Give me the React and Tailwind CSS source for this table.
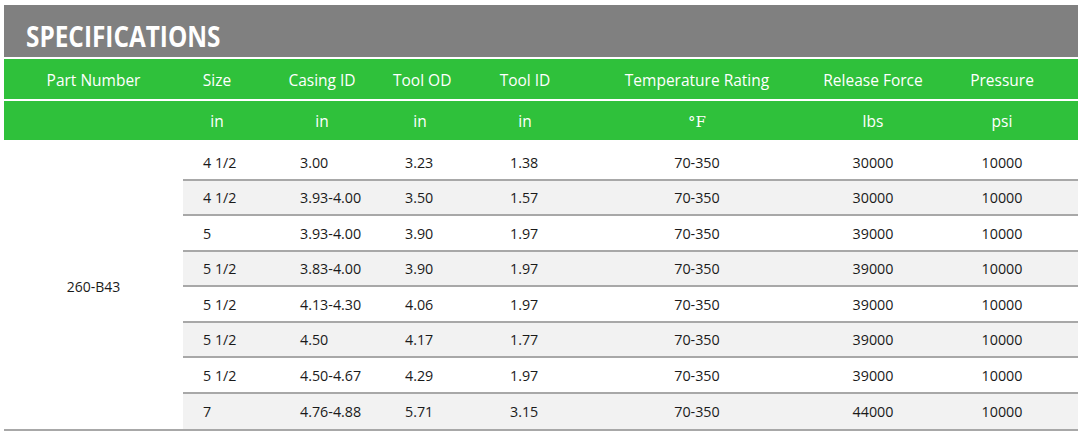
import React from "react";

const rows = [
  ["4 1/2", "3.00", "3.23", "1.38", "70-350", "30000", "10000"],
  ["4 1/2", "3.93-4.00", "3.50", "1.57", "70-350", "30000", "10000"],
  ["5", "3.93-4.00", "3.90", "1.97", "70-350", "39000", "10000"],
  ["5 1/2", "3.83-4.00", "3.90", "1.97", "70-350", "39000", "10000"],
  ["5 1/2", "4.13-4.30", "4.06", "1.97", "70-350", "39000", "10000"],
  ["5 1/2", "4.50", "4.17", "1.77", "70-350", "39000", "10000"],
  ["5 1/2", "4.50-4.67", "4.29", "1.97", "70-350", "39000", "10000"],
  ["7", "4.76-4.88", "5.71", "3.15", "70-350", "44000", "10000"],
];

const cols = "grid grid-cols-[179px_68px_142px_54px_156px_188px_164px_123px]";
const font = { fontFamily: '"Open Sans", "Noto Sans", sans-serif' };

export default function App() {
  return (
    <div className="w-[1084px] h-[437px] bg-white pt-[5px] pl-[4px] pr-[6px]" style={font}>
      <div className="h-[52px] bg-[#808080] flex items-center pl-[22px]">
        <span
          className="inline-block origin-left scale-x-[0.87] text-white font-bold text-[28px] leading-none pt-[9px] whitespace-nowrap"
          style={{ fontFamily: '"Open Sans", sans-serif' }}
        >
          SPECIFICATIONS
        </span>
      </div>
      <div className={`${cols} h-[40px] mt-[2px] pt-[3px] bg-[#2fc13b] text-white text-[15.5px] items-center text-center whitespace-nowrap`}>
        <div>Part Number</div>
        <div>Size</div>
        <div>Casing ID</div>
        <div>Tool OD</div>
        <div>Tool ID</div>
        <div>Temperature Rating</div>
        <div>Release Force</div>
        <div className="pr-[29px]">Pressure</div>
      </div>
      <div className={`${cols} h-[39px] mt-[2px] pt-[3px] bg-[#2fc13b] text-white text-[15.5px] items-center text-center`}>
        <div></div>
        <div>in</div>
        <div>in</div>
        <div>in</div>
        <div>in</div>
        <div style={{ fontFamily: '"DejaVu Serif", "Liberation Serif", serif' }} className="text-[15px]">°F</div>
        <div>lbs</div>
        <div className="pr-[29px]">psi</div>
      </div>
      <div className="flex border-b-2 border-[#a8a8a8] mt-[3px]">
        <div className="w-[179px] flex items-center justify-center text-[14px] text-[#1a1a1a]">260-B43</div>
        <div className="flex-1 flex flex-col">
          {rows.map((r, i) => (
            <div
              key={i}
              className={`grid grid-cols-[68px_142px_54px_156px_188px_164px_123px] items-center text-[14.3px] text-[#1a1a1a] whitespace-nowrap ${
                i === 0 ? "h-[37.5px] pt-[3px]" : "h-[35.5px] pt-[1px]"
              } ${i % 2 === 1 ? "bg-[#f2f2f2]" : "bg-white"} ${
                i < rows.length - 1 ? "border-b-2 border-[#a8a8a8]" : ""
              }`}
            >
              <div className="pl-[20px]">{r[0]}</div>
              <div className="pl-[49px]">{r[1]}</div>
              <div className="pl-[12px]">{r[2]}</div>
              <div className="pl-[63px]">{r[3]}</div>
              <div className="text-center">{r[4]}</div>
              <div className="text-center">{r[5]}</div>
              <div className="text-center pr-[29px]">{r[6]}</div>
            </div>
          ))}
        </div>
      </div>
    </div>
  );
}
